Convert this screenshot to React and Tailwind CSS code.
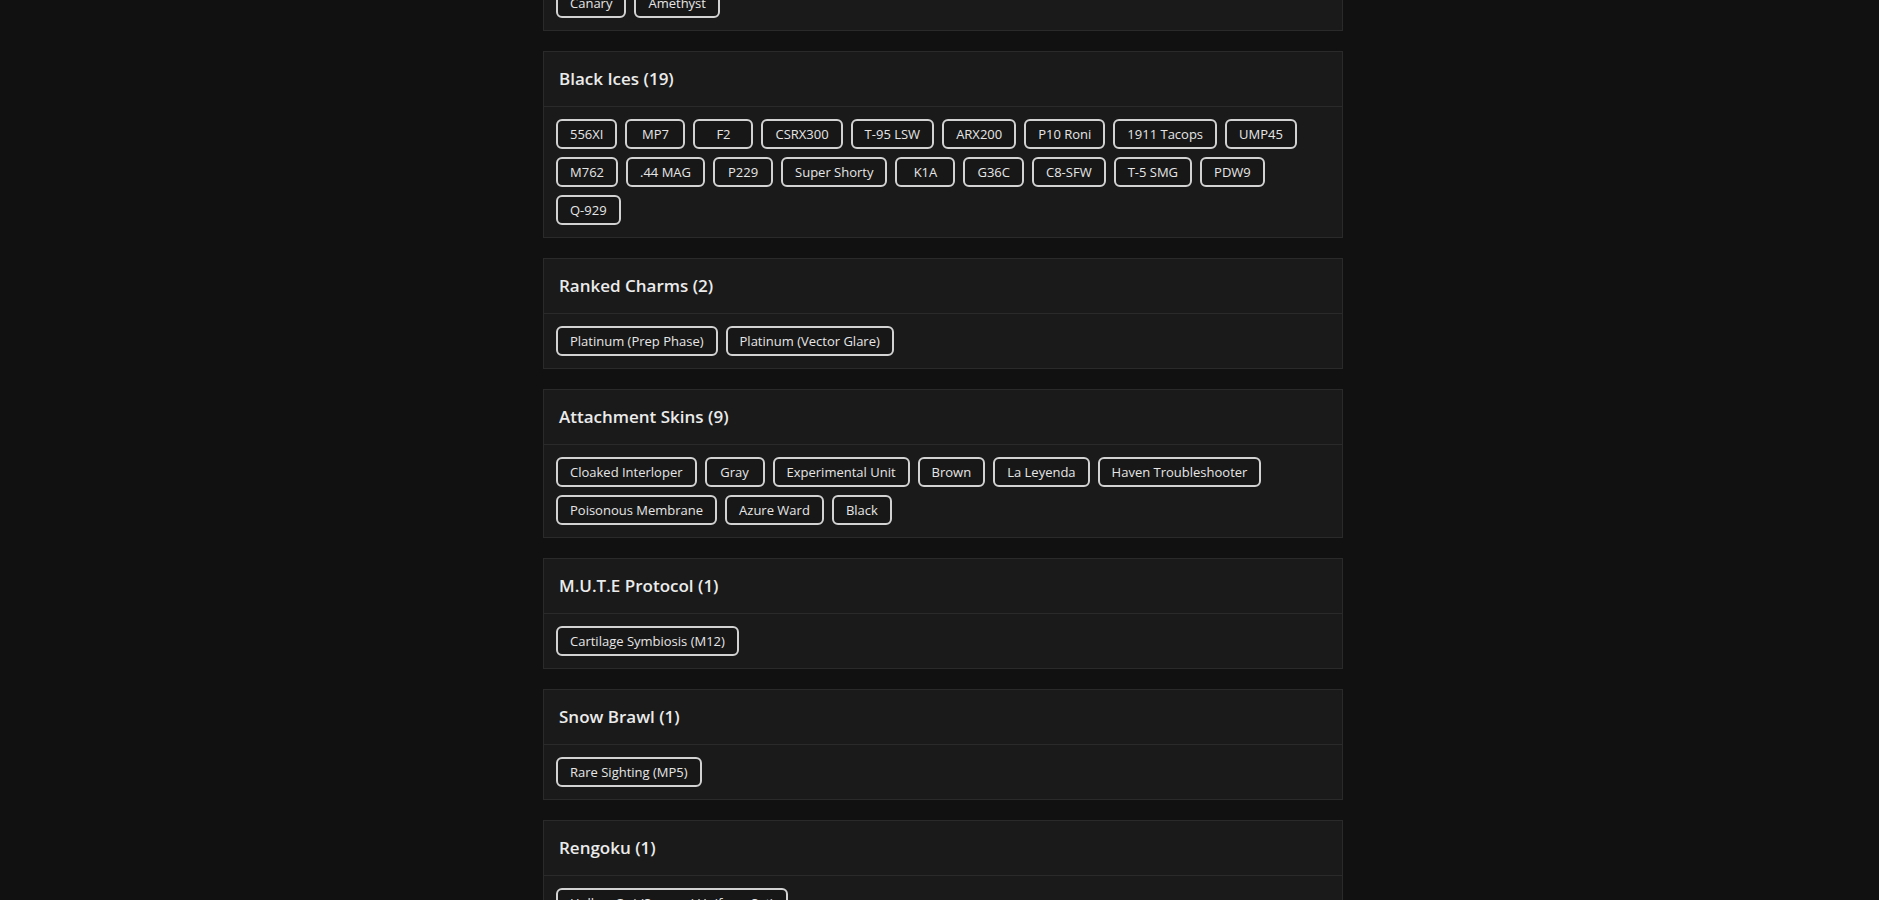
import React from "react";

const sections = [
  { title: "Colours (2)", items: ["Canary", "Amethyst"] },
  {
    title: "Black Ices (19)",
    items: [
      "556XI", "MP7", "F2", "CSRX300", "T-95 LSW", "ARX200", "P10 Roni", "1911 Tacops", "UMP45",
      "M762", ".44 MAG", "P229", "Super Shorty", "K1A", "G36C", "C8-SFW", "T-5 SMG", "PDW9", "Q-929",
    ],
  },
  { title: "Ranked Charms (2)", items: ["Platinum (Prep Phase)", "Platinum (Vector Glare)"] },
  {
    title: "Attachment Skins (9)",
    items: [
      "Cloaked Interloper", "Gray", "Experimental Unit", "Brown", "La Leyenda", "Haven Troubleshooter",
      "Poisonous Membrane", "Azure Ward", "Black",
    ],
  },
  { title: "M.U.T.E Protocol (1)", items: ["Cartilage Symbiosis (M12)"] },
  { title: "Snow Brawl (1)", items: ["Rare Sighting (MP5)"] },
  { title: "Rengoku (1)", items: ["Hollow Oni (Samurai Uniform Set)"] },
];

function Chip({ label }) {
  return (
    <span className="min-w-[60px] text-center px-3 py-1 border-2 border-[#d2d2d2] rounded-md bg-[#171717] text-[13px] leading-[18px] text-[#e6e6e6]">
      {label}
    </span>
  );
}

function Section({ title, items, first }) {
  return (
    <div className={`bg-[#1a1a1a] border border-[#2a2a2a] mb-5 ${first ? "-mt-[80px]" : ""}`}>
      {/* header */}
      <div className="px-[15px] py-4 border-b border-[#2a2a2a]">
        <h2 className="text-[17px] leading-[22px] font-semibold text-[#ebebeb]">{title}</h2>
      </div>
      {/* skins */}
      <div className="pl-3 pr-[40px] py-3 flex flex-wrap gap-2">
        {items.map((it) => (
          <Chip key={it} label={it} />
        ))}
      </div>
    </div>
  );
}

export default function App() {
  return (
    <div
      className="h-screen overflow-hidden bg-[#111111] flex justify-center pl-[7px]"
      style={{ fontFamily: '"Open Sans", "Liberation Sans", sans-serif' }}
    >
      <main className="w-[800px] shrink-0">
        {sections.map((s, i) => (
          <Section key={s.title} title={s.title} items={s.items} first={i === 0} />
        ))}
      </main>
    </div>
  );
}
